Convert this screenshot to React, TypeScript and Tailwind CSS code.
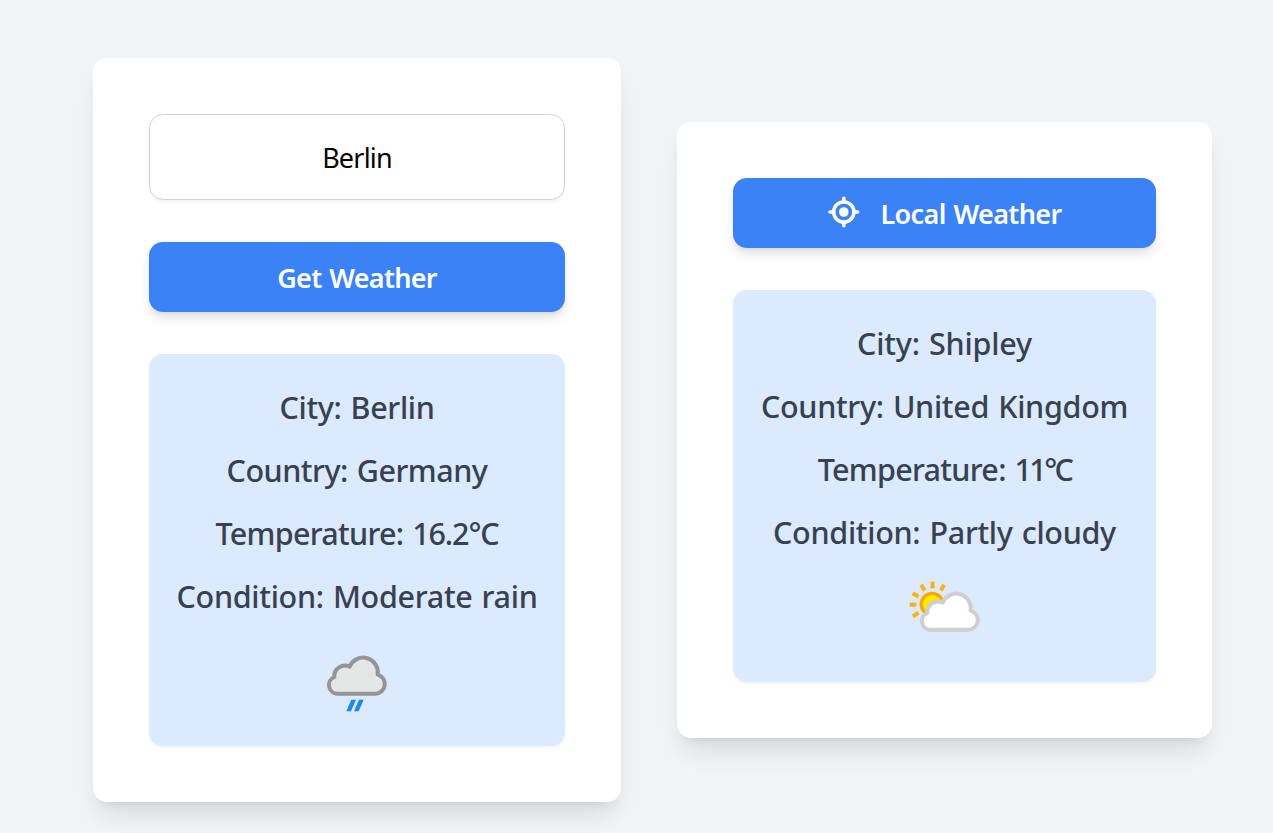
import React from "react";

const CLOUD =
  "M84 161 H196 A29 29 0 0 0 203 104 A44 44.500 0 0 0 119 80 A32 32 0 0 0 73 111 A26 26 0 0 0 84 161 Z";

function RainIcon() {
  return (
    <svg className="size-[84px]" viewBox="15 -18 252 252">
      <path d={CLOUD} fill="#e5e6e6" stroke="#949594" strokeWidth="12" strokeLinejoin="round" />
      <path d="M124 179H138L123 214H109Z M147 179H161L146 214H132Z" fill="#1e88e5" />
    </svg>
  );
}

function PartlyCloudyIcon() {
  return (
    <svg className="size-[84px]" viewBox="22.5 0 252 252">
      <circle cx="110" cy="103" r="33" fill="#ffea00" stroke="#ffa50a" strokeWidth="10" />
      {[-120, -90, -60, -30, 0, 30].map((angle) => (
        <rect key={angle} x="105.5" y="35" width="12" height="20" fill="#ffb010" transform={`rotate(${angle} 111.5 104)`} />
      ))}
      <path d={CLOUD} transform="translate(22.5 18)" fill="#fff" stroke="#cfcfd0" strokeWidth="12" strokeLinejoin="round" />
    </svg>
  );
}

function LocateIcon() {
  return (
    <svg className="-mt-[3px] size-8" viewBox="0 0 32 32" fill="none" stroke="#fff" strokeLinecap="round">
      <circle cx="15.8" cy="16" r="10.1" strokeWidth="3.5" />
      <circle cx="15.8" cy="16" r="4.8" fill="#fff" stroke="none" />
      <path d="M15.800 2.200V5M15.800 27V29.800M2 16H5M26.800 16H29.600" strokeWidth="3.6" />
    </svg>
  );
}

interface Line {
  label: string;
  value: string;
  className: string;
  valueClassName?: string;
}

function Report({ lines, children }: { lines: Line[]; children: React.ReactNode }) {
  return (
    <div className="mt-[42px] flex h-[392px] flex-col items-center rounded-[14px] bg-[#dbeafe] pt-7 shadow-[0_1.75px_3.5px_rgba(0,0,0,0.05)]">
      {lines.map((line) => (
        <p key={line.label} className={`mb-3.5 h-[49px] whitespace-nowrap text-[30.5px] leading-[50px] font-medium text-[#374151] [word-spacing:1.5px] ${line.className}`}>
          {line.label}: <span className={line.valueClassName}>{line.value}</span>
        </p>
      ))}
      {children}
    </div>
  );
}

const card = "rounded-[14px] bg-white p-14 shadow-[0_17.5px_26.25px_-5.25px_rgba(0,0,0,0.1),0_7px_10.5px_-7px_rgba(0,0,0,0.1)]";
const button =
  "flex h-[70px] w-full items-center justify-center rounded-[14px] bg-[#3b82f6] text-[27px] leading-[42px] font-semibold whitespace-nowrap text-white shadow-[0_7px_10.5px_-1.75px_rgba(0,0,0,0.1),0_3.5px_7px_-3.5px_rgba(0,0,0,0.1)] [word-spacing:1.5px]";

export default function App() {
  return (
    <main className="flex h-[833px] items-start gap-14 overflow-hidden bg-[#f3f4f6] pt-[58px] pl-[93px] font-['Noto_Sans',sans-serif]">
      <section className={`w-[528px] ${card}`}>
        <input
          className="mb-[42px] block h-[86px] w-full rounded-[14px] border border-[#d1d5db] bg-white text-center text-[27px] tracking-[-0.8px] text-black shadow-[0_1.75px_3.5px_rgba(0,0,0,0.05)] outline-none"
          defaultValue="Berlin"
        />
        <button className={`${button} tracking-[-0.7px]`}>
          <span className="mt-0.5">Get Weather</span>
        </button>
        <Report
          lines={[
            { label: "City", value: "Berlin", className: "tracking-[-0.35px]" },
            { label: "Country", value: "Germany", className: "tracking-[-0.5px]" },
            { label: "Temperature", value: "16.2°C", className: "tracking-[-0.7px]", valueClassName: "tracking-[-1.1px]" },
            { label: "Condition", value: "Moderate rain", className: "tracking-[-0.3px]" },
          ]}
        >
          <RainIcon />
        </Report>
      </section>
      <section className={`mt-16 w-[535px] ${card}`}>
        <button className={`${button} gap-[21px] tracking-[-0.65px]`}>
          <LocateIcon />
          <span className="mt-0.5">Local Weather</span>
        </button>
        <Report
          lines={[
            { label: "City", value: "Shipley", className: "tracking-[-0.2px]" },
            { label: "Country", value: "United Kingdom", className: "tracking-[-0.3px]" },
            { label: "Temperature", value: "11°C", className: "tracking-[-0.7px]", valueClassName: "tracking-[-2.6px]" },
            { label: "Condition", value: "Partly cloudy", className: "tracking-[-0.3px]" },
          ]}
        >
          <PartlyCloudyIcon />
        </Report>
      </section>
    </main>
  );
}
